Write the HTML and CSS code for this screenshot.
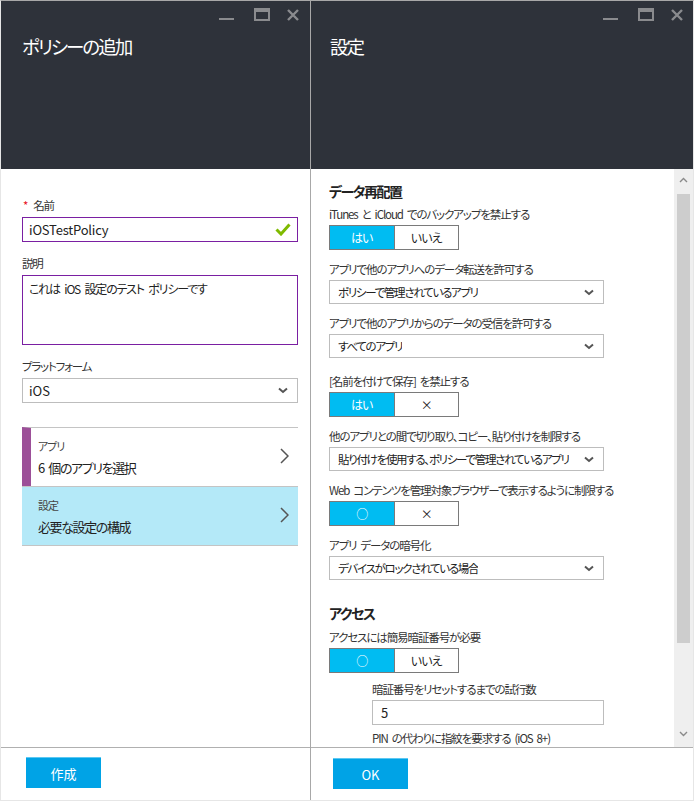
FILE: index.html
```html
<!DOCTYPE html>
<html lang="ja">
<head>
<meta charset="utf-8">
<title>ポリシーの追加</title>
<link rel="stylesheet" href="styles.css">
</head>
<body>
<div class="app">
  <section class="blade blade-left">
    <header class="blade-header">
      <div class="win-controls">
        <svg class="ic ic-min" width="15" height="13" viewBox="0 0 15 13"><rect x="0" y="10" width="15" height="2"/></svg>
        <svg class="ic ic-max" width="16" height="13" viewBox="0 0 16 13"><path fill-rule="evenodd" d="M0 0H16V13H0Z M2 4V11H14V4Z"/></svg>
        <svg class="ic ic-close" width="12" height="12" viewBox="0 0 12 12"><path d="M1 1L11 11M11 1L1 11" fill="none" stroke-width="2.4"/></svg>
      </div>
      <h1 class="blade-title">ポリシーの追加</h1>
    </header>
    <div class="blade-body left-body">
      <div class="field">
        <label class="field-label"><span class="req">*</span>名前</label>
        <div class="input input-valid">
          <span>iOSTestPolicy</span>
          <svg class="check" width="16" height="13" viewBox="0 0 16 13"><path d="M1.5 6.5L6 11L14.5 1.5" fill="none" stroke="#7fba00" stroke-width="3"/></svg>
        </div>
      </div>
      <div class="field">
        <label class="field-label">説明</label>
        <div class="textarea">これは iOS 設定のテスト ポリシーです</div>
      </div>
      <div class="field">
        <label class="field-label">プラットフォーム</label>
        <div class="select select-left">
          <span class="select-text">iOS</span>
          <svg class="chev-down" width="10" height="7" viewBox="0 0 10 7"><path d="M1 1.5L5 5L9 1.5" fill="none" stroke-width="2"/></svg>
        </div>
      </div>
      <ul class="nav-list">
        <li class="nav-item nav-item-marked">
          <div class="nav-text">
            <div class="nav-small">アプリ</div>
            <div class="nav-main">6 個のアプリを選択</div>
          </div>
          <svg class="chev-right" width="9" height="16" viewBox="0 0 9 16"><path d="M1 1L8 8L1 15" fill="none" stroke-width="1.5"/></svg>
        </li>
        <li class="nav-item nav-item-active">
          <div class="nav-text">
            <div class="nav-small">設定</div>
            <div class="nav-main">必要な設定の構成</div>
          </div>
          <svg class="chev-right" width="9" height="16" viewBox="0 0 9 16"><path d="M1 1L8 8L1 15" fill="none" stroke-width="1.5"/></svg>
        </li>
      </ul>
    </div>
    <footer class="blade-footer footer-left">
      <button class="btn-primary">作成</button>
    </footer>
  </section>

  <section class="blade blade-right">
    <header class="blade-header">
      <div class="win-controls">
        <svg class="ic ic-min" width="15" height="13" viewBox="0 0 15 13"><rect x="0" y="10" width="15" height="2"/></svg>
        <svg class="ic ic-max" width="16" height="13" viewBox="0 0 16 13"><path fill-rule="evenodd" d="M0 0H16V13H0Z M2 4V11H14V4Z"/></svg>
        <svg class="ic ic-close" width="12" height="12" viewBox="0 0 12 12"><path d="M1 1L11 11M11 1L1 11" fill="none" stroke-width="2.4"/></svg>
      </div>
      <h1 class="blade-title">設定</h1>
    </header>
    <div class="blade-body right-body">
      <div class="scroll-content">
        <h2 class="section-title">データ再配置</h2>
        <div class="rfield">
          <div class="rlabel">iTunes と iCloud でのバックアップを禁止する</div>
          <div class="toggle"><span class="opt on">はい</span><span class="opt">いいえ</span></div>
        </div>
        <div class="rfield">
          <div class="rlabel">アプリで他のアプリへのデータ転送を許可する</div>
          <div class="select"><span class="select-text">ポリシーで管理されているアプリ</span><svg class="chev-down" width="10" height="7" viewBox="0 0 10 7"><path d="M1 1.5L5 5L9 1.5" fill="none" stroke-width="2"/></svg></div>
        </div>
        <div class="rfield">
          <div class="rlabel">アプリで他のアプリからのデータの受信を許可する</div>
          <div class="select"><span class="select-text">すべてのアプリ</span><svg class="chev-down" width="10" height="7" viewBox="0 0 10 7"><path d="M1 1.5L5 5L9 1.5" fill="none" stroke-width="2"/></svg></div>
        </div>
        <div class="rfield rfield-bracket">
          <div class="rlabel">[名前を付けて保存] を禁止する</div>
          <div class="toggle"><span class="opt on">はい</span><span class="opt">×</span></div>
        </div>
        <div class="rfield">
          <div class="rlabel">他のアプリとの間で切り取り、コピー、貼り付けを制限する</div>
          <div class="select"><span class="select-text">貼り付けを使用する、ポリシーで管理されているアプリ</span><svg class="chev-down" width="10" height="7" viewBox="0 0 10 7"><path d="M1 1.5L5 5L9 1.5" fill="none" stroke-width="2"/></svg></div>
        </div>
        <div class="rfield">
          <div class="rlabel">Web コンテンツを管理対象ブラウザーで表示するように制限する</div>
          <div class="toggle"><span class="opt on">○</span><span class="opt">×</span></div>
        </div>
        <div class="rfield">
          <div class="rlabel">アプリ データの暗号化</div>
          <div class="select"><span class="select-text">デバイスがロックされている場合</span><svg class="chev-down" width="10" height="7" viewBox="0 0 10 7"><path d="M1 1.5L5 5L9 1.5" fill="none" stroke-width="2"/></svg></div>
        </div>
        <h2 class="section-title section-gap">アクセス</h2>
        <div class="rfield rfield-tight">
          <div class="rlabel">アクセスには簡易暗証番号が必要</div>
          <div class="toggle"><span class="opt on">○</span><span class="opt">いいえ</span></div>
        </div>
        <div class="rfield sub sub-input">
          <div class="rlabel">暗証番号をリセットするまでの試行数</div>
          <div class="text-input">5</div>
        </div>
        <div class="rfield sub">
          <div class="rlabel">PIN の代わりに指紋を要求する (iOS 8+)</div>
        </div>
      </div>
      <div class="scrollbar">
        <div class="sb-arrow sb-up"><svg width="9" height="6" viewBox="0 0 9 6"><path d="M1 5L4.5 1.5L8 5" fill="none" stroke-width="1.4"/></svg></div>
        <div class="sb-track"><div class="sb-thumb"></div></div>
        <div class="sb-arrow sb-down"><svg width="9" height="6" viewBox="0 0 9 6"><path d="M1 1L4.5 4.5L8 1" fill="none" stroke-width="1.4"/></svg></div>
      </div>
    </div>
    <footer class="blade-footer footer-right">
      <button class="btn-primary">OK</button>
    </footer>
  </section>
</div>
</body>
</html>
```

FILE: styles.css
```css
* { box-sizing: border-box; }
html, body { margin: 0; padding: 0; background: #fff; }
body {
  font-family: "Noto Sans CJK JP", "Noto Sans", sans-serif;
  font-feature-settings: "palt" 1;
  color: #333;
}
.app {
  display: flex;
  width: 694px;
  height: 801px;
  border: 1px solid #e6e6e6;
  border-top-color: #a8a8a8;
  overflow: hidden;
}
.blade {
  display: flex;
  flex-direction: column;
  height: 100%;
  min-width: 0;
}
.blade-left { width: 310px; border-right: 1px solid #a8a8a8; flex: none; }
.blade-right { flex: 1; }

.blade-header {
  height: 168px;
  flex: none;
  background: #2e323a;
  padding: 7px 11px 0 21px;
}
.blade-right .blade-header { padding-left: 19px; padding-right: 10px; }
.win-controls {
  display: flex;
  justify-content: flex-end;
  align-items: flex-start;
  height: 13px;
}
.ic { fill: #8a8b8e; stroke: #8a8b8e; }
.ic-min { margin-right: 20px; stroke: none; }
.ic-max { margin-right: 17px; stroke: none; }
.ic-close { margin-top: 1px; fill: none; }
.blade-title {
  margin: 12px 0 0;
  font-size: 18.5px;
  font-weight: normal;
  line-height: 26px;
  letter-spacing: -2px;
  color: #fff;
}

.blade-body { flex: 1; min-height: 0; overflow: hidden; }
.left-body { padding: 27px 12px 0 21px; }

.field { margin-bottom: 12px; }
.field-label {
  display: block;
  font-size: 11.5px;
  line-height: 18px;
  letter-spacing: -1.2px;
  margin-bottom: 3px;
  color: #333;
}
.req { color: #e81123; margin-right: 6px; margin-left: 1px; }
.input {
  height: 25px;
  border: 1px solid #7a1fa2;
  display: flex;
  align-items: center;
  justify-content: space-between;
  padding: 0 6px 0 6px;
  font-size: 13px;
  letter-spacing: -0.2px;
  color: #222;
}
.check { display: block; }
.textarea {
  height: 70px;
  border: 1px solid #7a1fa2;
  padding: 4px 6px;
  font-size: 12px;
  line-height: 18px;
  letter-spacing: -1.2px;
  word-spacing: 3px;
  color: #222;
}
.select {
  height: 24px;
  width: 275px;
  border: 1px solid #bdbdbd;
  display: flex;
  align-items: center;
  justify-content: space-between;
  padding: 0 9px 0 8px;
  font-size: 11.5px;
  letter-spacing: -1.3px;
  color: #222;
}
.select-text { white-space: nowrap; overflow: hidden; }
.select-left { width: 276px; height: 25px; font-size: 13px; padding-left: 6px; letter-spacing: 0; }
.chev-down { stroke: #555; display: block; flex: none; }

.nav-list { list-style: none; margin: 24px 0 0; padding: 0; border-bottom: 1px solid #c4c4c4; }
.nav-item {
  height: 59px;
  border-top: 1px solid #c4c4c4;
  display: flex;
  align-items: center;
  justify-content: space-between;
  padding: 0 9px 0 16px;
}
.nav-item-marked { border-left: 9px solid #9c4f98; padding-left: 7px; }
.nav-item-active { background: #b4e9f8; }
.nav-text { padding-top: 2px; }
.nav-small { font-size: 11px; line-height: 16px; color: #444; letter-spacing: -1px; }
.nav-main { font-size: 13px; line-height: 20px; margin-top: 4px; color: #222; letter-spacing: -1.4px; word-spacing: 3px; }
.chev-right { stroke: #555; display: block; margin-bottom: 2px; }

.blade-footer {
  height: 53px;
  flex: none;
  border-top: 1px solid #b0b0b0;
  padding-top: 9px;
}
.footer-left { padding-left: 25px; }
.footer-right { padding-left: 22px; padding-top: 10px; }
.btn-primary {
  width: 75px;
  height: 31px;
  border: none;
  border-top: 1px solid #5cc8f2;
  background: #00a3e6;
  color: #fff;
  font-family: inherit;
  font-size: 13px;
  padding: 0;
}

.right-body { display: flex; }
.scroll-content {
  flex: 1;
  min-width: 0;
  padding: 12px 0 0 18px;
  overflow: hidden;
}
.section-title {
  margin: 0 0 4px;
  font-size: 14px;
  font-weight: bold;
  line-height: 20px;
  letter-spacing: -1.5px;
  color: #222;
}
.section-gap { margin-top: 23px; margin-bottom: 5px; }
.rfield { margin-bottom: 10px; }
.rfield-bracket { margin-top: 14px; }
.rfield-tight { margin-bottom: 7px; }
.sub-input { margin-bottom: 4px; }
.rlabel {
  font-size: 11.5px;
  line-height: 18px;
  letter-spacing: -1.1px;
  word-spacing: 2.5px;
  margin-bottom: 2px;
  color: #333;
  white-space: nowrap;
}
.toggle {
  display: flex;
  width: 130px;
  height: 25px;
  border: 1px solid #7a7a7a;
}
.opt {
  flex: 1;
  display: flex;
  align-items: center;
  justify-content: center;
  font-size: 12px;
  letter-spacing: -0.8px;
  color: #222;
}
.opt + .opt { border-left: 1px solid #7a7a7a; }
.opt.on { background: #00bcf2; color: #fff; }
.sub { padding-left: 43px; }
.text-input {
  width: 232px;
  height: 25px;
  border: 1px solid #bdbdbd;
  display: flex;
  align-items: center;
  padding-left: 8px;
  font-size: 13px;
  color: #222;
}

.scrollbar {
  width: 19px;
  flex: none;
  background: #efefef;
  display: flex;
  flex-direction: column;
}
.sb-arrow {
  display: flex;
  justify-content: center;
  stroke: #8a8a8a;
}
.sb-up { height: 25px; padding-top: 8px; }
.sb-down { height: 24px; padding-top: 8px; }
.sb-arrow svg { display: block; }
.sb-track { flex: 1; padding: 0 3px; }
.sb-thumb { height: 449px; background: #cdcdcd; }
```
